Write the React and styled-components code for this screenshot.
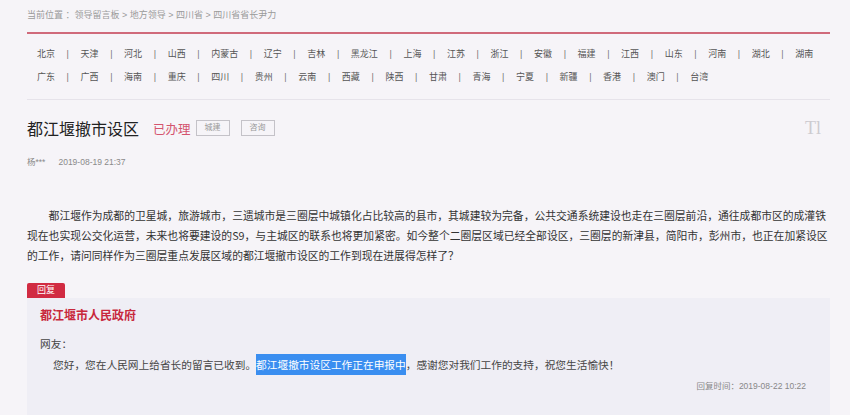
import React from 'react';
import styled, { createGlobalStyle } from 'styled-components';

const GlobalStyle = createGlobalStyle`
  html, body {
    margin: 0;
    padding: 0;
    background: #f6f4f8;
    font-family: "Liberation Sans", "Noto Sans CJK SC", sans-serif;
    color: #333;
  }
`;

const Page = styled.div`
  width: 803px;
  padding: 8px 0 0 27px;
`;

const Crumb = styled.div`
  font-size: 9px;
  line-height: 14px;
  color: #9a9a9a;
  padding-bottom: 10px;
  border-bottom: 2px solid #d06a7b;
`;

const Nav = styled.div`
  padding: 9px 0 10px 10px;
  border-bottom: 1px solid #e6e3ea;
`;

const NavRow = styled.div`
  display: flex;
  font-size: 9px;
  line-height: 23px;
  color: #555;
`;

const Sep = styled.span`
  margin: 0 11.6px;
  color: #777;
`;

const TitleRow = styled.div`
  display: flex;
  align-items: center;
  margin-top: 16px;
  height: 24px;
`;

const Title = styled.h1`
  margin: 0;
  font-size: 16px;
  font-weight: normal;
  color: #222;
  font-family: "Noto Sans CJK SC", sans-serif;
`;

const Status = styled.span`
  margin-left: 14px;
  font-size: 12.5px;
  color: #d4546e;
  font-family: "Noto Sans CJK SC", sans-serif;
`;

const Tag = styled.span`
  margin-left: ${(p) => p.$gap}px;
  width: 32px;
  height: 14px;
  border: 1px solid #c4c2c8;
  font-size: 8px;
  line-height: 14px;
  text-align: center;
  color: #999;
`;

const Mark = styled.span`
  margin-left: auto;
  margin-right: 9px;
  font-family: "Liberation Serif", serif;
  font-size: 18px;
  color: #cdcbd0;
`;

const Meta = styled.div`
  display: flex;
  gap: 13px;
  margin-top: 16px;
  font-size: 8.5px;
  line-height: 12px;
  color: #8a8a8a;
`;

const Body = styled.p`
  margin: 37px 0 0;
  font-size: 10.8px;
  line-height: 20px;
  color: #333;
  text-indent: 2em;
  word-break: break-all;
  font-family: "Noto Sans CJK SC", sans-serif;
`;

const ReplyTag = styled.div`
  margin-top: 18px;
  width: 38px;
  height: 15px;
  background: #d12b42;
  border-radius: 2px 2px 0 0;
  color: #fff;
  font-size: 9px;
  line-height: 15px;
  text-align: center;
`;

const ReplyBox = styled.div`
  background: #efeef5;
  padding: 8px 24px 40px 13px;
`;

const Org = styled.div`
  font-size: 12px;
  font-weight: bold;
  line-height: 18px;
  color: #c8283c;
  font-family: "Noto Sans CJK SC", sans-serif;
`;

const Greet = styled.div`
  margin-top: 10px;
  font-size: 10.7px;
  line-height: 20px;
  color: #444;
  font-family: "Noto Sans CJK SC", sans-serif;
`;

const ReplyText = styled.div`
  font-size: 10.7px;
  line-height: 22px;
  color: #444;
  padding-left: 13px;
  font-family: "Noto Sans CJK SC", sans-serif;
`;

const Hl = styled.span`
  background: #3a8ef0;
  color: #fff;
  padding: 3px 0;
`;

const ReplyTime = styled.div`
  text-align: right;
  font-size: 8.5px;
  line-height: 14px;
  color: #888;
  margin-top: 3px;
`;

const rows = [
  ['北京', '天津', '河北', '山西', '内蒙古', '辽宁', '吉林', '黑龙江', '上海', '江苏', '浙江', '安徽', '福建', '江西', '山东', '河南', '湖北', '湖南'],
  ['广东', '广西', '海南', '重庆', '四川', '贵州', '云南', '西藏', '陕西', '甘肃', '青海', '宁夏', '新疆', '香港', '澳门', '台湾'],
];

const App = () => {
  return (
    <>
      <GlobalStyle />
      <Page>
        <Crumb>当前位置 ：领导留言板 &gt; 地方领导 &gt; 四川省 &gt; 四川省省长尹力</Crumb>
        <Nav>
          {rows.map((row, i) => (
            <NavRow key={i}>
              {row.map((name, j) => (
                <React.Fragment key={name}>
                  {j > 0 && <Sep>|</Sep>}
                  <span>{name}</span>
                </React.Fragment>
              ))}
            </NavRow>
          ))}
        </Nav>
        <TitleRow>
          <Title>都江堰撤市设区</Title>
          <Status>已办理</Status>
          <Tag $gap={5}>城建</Tag>
          <Tag $gap={11}>咨询</Tag>
          <Mark>Tl</Mark>
        </TitleRow>
        <Meta>
          <span>杨***</span>
          <span>2019-08-19 21:37</span>
        </Meta>
        <Body>
          都江堰作为成都的卫星城，旅游城市，三遗城市是三圈层中城镇化占比较高的县市，其城建较为完备，公共交通系统建设也走在三圈层前沿，通往成都市区的成灌铁现在也实现公交化运营，未来也将要建设的S9，与主城区的联系也将更加紧密。如今整个二圈层区域已经全部设区，三圈层的新津县，简阳市，彭州市，也正在加紧设区的工作，请问同样作为三圈层重点发展区域的都江堰撤市设区的工作到现在进展得怎样了？
        </Body>
        <ReplyTag>回复</ReplyTag>
        <ReplyBox>
          <Org>都江堰市人民政府</Org>
          <Greet>网友：</Greet>
          <ReplyText>
            您好，您在人民网上给省长的留言已收到。<Hl>都江堰撤市设区工作正在申报中</Hl>，感谢您对我们工作的支持，祝您生活愉快！
          </ReplyText>
          <ReplyTime>回复时间：2019-08-22 10:22</ReplyTime>
        </ReplyBox>
      </Page>
    </>
  );
};

export default App;
